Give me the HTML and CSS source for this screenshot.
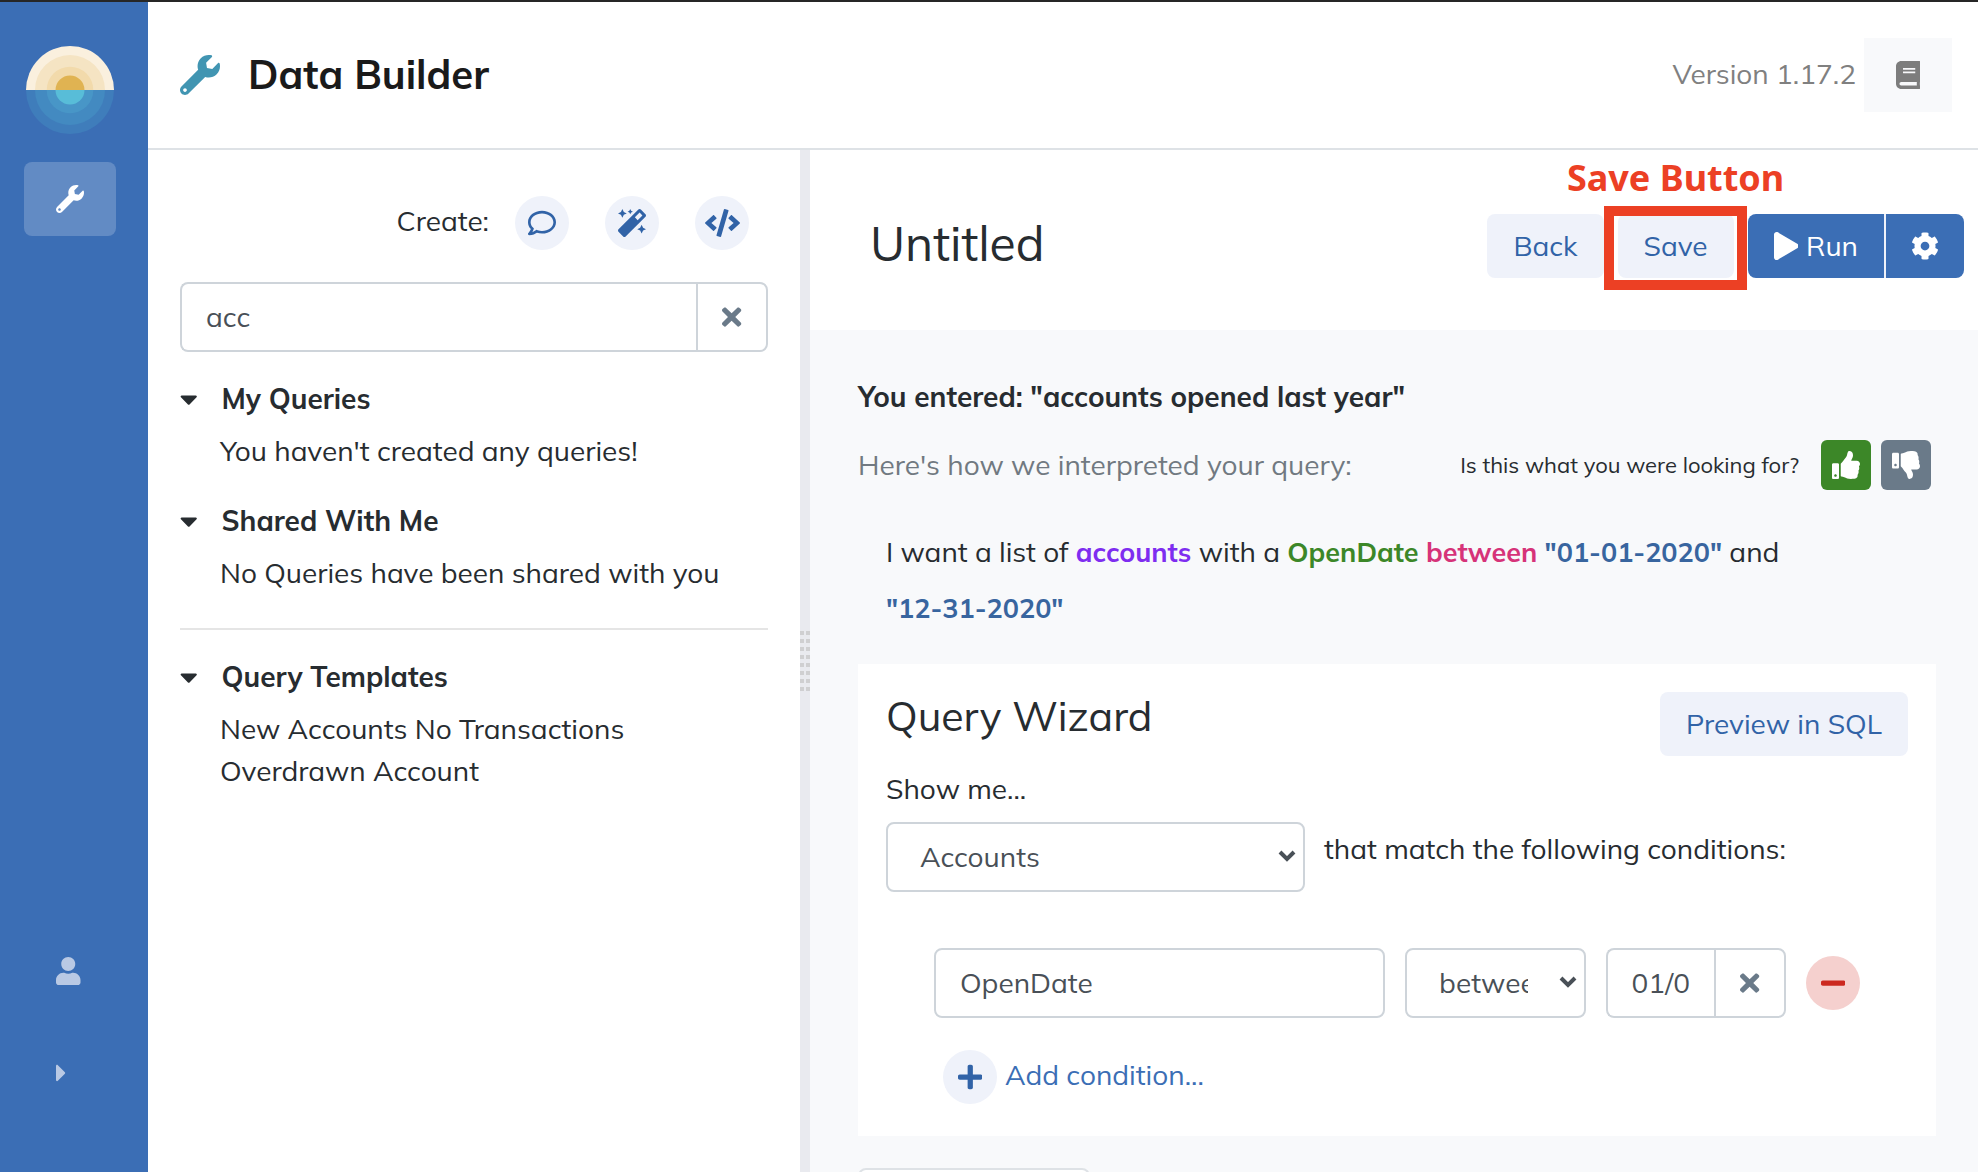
FILE: index.html
```html
<!DOCTYPE html>
<html lang="en">
<head>
    <meta charset="UTF-8">
    <meta name="viewport" content="width=device-width, initial-scale=1.0">
    <title>Data Builder</title>
    <link rel="stylesheet" href="styles.css">
</head>
<body>

    <nav class="sidebar">
        <a class="logo" href="#" aria-label="Home">
            <svg viewBox="0 0 88 88">
                <path d="M0 44a44 44 0 0 1 88 0z" fill="#faf0de"/>
                <path d="M9 44a35 35 0 0 1 70 0z" fill="#f5e4c3"/>
                <path d="M20.700 44a23.300 23.300 0 0 1 46.600 0z" fill="#f2daab"/>
                <path d="M29.500 44a14.500 14.500 0 0 1 29 0z" fill="#e0b352"/>
                <path d="M0 44a44 44 0 0 0 88 0z" fill="#3f7dbb"/>
                <path d="M9 44a35 35 0 0 0 70 0z" fill="#438ac1"/>
                <path d="M20.700 44a23.300 23.300 0 0 0 46.600 0z" fill="#4896c7"/>
                <path d="M29.500 44a14.500 14.500 0 0 0 29 0z" fill="#58bdd8"/>
            </svg>
        </a>
        <a class="nav-item active" href="#" aria-label="Data Builder">
            <svg class="icon" viewBox="0 0 512 512"><use href="#wrench"/></svg>
        </a>
        <a class="nav-item nav-bottom" href="#" aria-label="Account">
            <svg class="icon" viewBox="0 0 448 512"><path d="M224 256c70.700 0 128-57.300 128-128S294.700 0 224 0 96 57.300 96 128s57.300 128 128 128zm89.600 32h-16.700c-22.200 10.200-46.900 16-72.900 16s-50.600-5.800-72.900-16h-16.700C60.200 288 0 348.200 0 422.400V464c0 26.500 21.500 48 48 48h352c26.500 0 48-21.500 48-48v-41.600c0-74.200-60.200-134.400-134.400-134.400z"/></svg>
        </a>
        <button class="nav-item" type="button" aria-label="Expand menu">
            <svg class="icon" viewBox="0 0 192 512"><path d="M0 384.662V127.338c0-17.818 21.543-26.741 34.142-14.142l128.662 128.662c7.810 7.810 7.810 20.474 0 28.284L34.142 398.804C21.543 411.404 0 402.480 0 384.662z"/></svg>
        </button>
    </nav>

    <div class="page">
        <header class="topbar">
            <svg class="icon-title" viewBox="0 0 512 512"><use href="#wrench"/></svg>
            <h1>Data Builder</h1>
            <span class="version">Version 1.17.2</span>
            <a class="docs" href="#" aria-label="Documentation">
                <svg class="icon" viewBox="0 0 448 512"><path d="M448 360V24c0-13.300-10.700-24-24-24H96C43 0 0 43 0 96v320c0 53 43 96 96 96h328c13.300 0 24-10.700 24-24v-16c0-7.500-3.500-14.300-8.900-18.700-4.200-15.400-4.200-59.300 0-74.700 5.400-4.300 8.900-11.100 8.900-18.600zM128 134c0-3.300 2.700-6 6-6h212c3.300 0 6 2.700 6 6v20c0 3.300-2.700 6-6 6H134c-3.300 0-6-2.700-6-6v-20zm0 64c0-3.300 2.700-6 6-6h212c3.300 0 6 2.700 6 6v20c0 3.300-2.700 6-6 6H134c-3.300 0-6-2.700-6-6v-20zm253.400 250H96c-17.700 0-32-14.300-32-32 0-17.600 14.400-32 32-32h285.400c-1.900 17.100-1.900 46.900 0 64z"/></svg>
            </a>
        </header>

        <div class="split">
            <!-- Query list -->
            <aside class="queries">
                <div class="create">
                    <span class="create-label">Create:</span>
                    <button class="round" type="button" aria-label="Ask a question">
                        <svg class="icon" viewBox="0 0 512 512"><path d="M256 32C114.600 32 0 125.100 0 240c0 47.600 19.900 91.200 52.900 126.300C38 405.700 7 439.100 6.500 439.500c-6.600 7-8.400 17.200-4.600 26S14.400 480 24 480c61.500 0 110-25.700 139.100-46.300C192 442.800 223.200 448 256 448c141.400 0 256-93.100 256-208S397.400 32 256 32zm0 368c-26.700 0-53.100-4.100-78.400-12.100l-22.700-7.200-19.500 13.800c-14.300 10.100-33.900 21.400-57.500 29 7.300-12.100 14.400-25.700 19.900-40.200l10.600-28.100-20.600-21.800C69.700 314.100 48 282.200 48 240c0-88.200 93.300-160 208-160s208 71.800 208 160-93.300 160-208 160z"/></svg>
                    </button>
                    <button class="round" type="button" aria-label="Query wizard">
                        <svg class="icon" viewBox="0 0 512 512"><path d="M224 96l16-32 32-16-32-16-16-32-16 32-32 16 32 16 16 32zM80 160l26.660-53.330L160 80l-53.340-26.670L80 0 53.340 53.330 0 80l53.340 26.670L80 160zm352 128l-26.660 53.330L352 368l53.340 26.670L432 448l26.660-53.330L512 368l-53.340-26.670L432 288zm70.620-193.770L417.770 9.380C411.530 3.120 403.340 0 395.150 0c-8.190 0-16.380 3.120-22.630 9.380L9.380 372.520c-12.500 12.500-12.500 32.760 0 45.250l84.850 84.850c6.250 6.250 14.440 9.370 22.620 9.370 8.190 0 16.380-3.120 22.630-9.370l363.140-363.150c12.500-12.480 12.500-32.750 0-45.240zM359.450 203.460l-50.910-50.910 86.600-86.600 50.910 50.910-86.600 86.600z"/></svg>
                    </button>
                    <button class="round" type="button" aria-label="Write SQL">
                        <svg class="icon" viewBox="0 0 640 512"><path d="M278.900 511.500l-61-17.700c-6.400-1.800-10-8.500-8.200-14.900L346.200 8.700c1.800-6.400 8.500-10 14.900-8.200l61 17.700c6.400 1.800 10 8.500 8.200 14.900L293.800 503.300c-1.900 6.400-8.500 10.100-14.900 8.200zm-114-112.200l43.500-46.400c4.600-4.900 4.300-12.700-.8-17.200L117 256l90.600-79.700c5.100-4.500 5.500-12.300.8-17.200l-43.500-46.400c-4.500-4.800-12.100-5.100-17-.5L3.800 247.200c-5.100 4.700-5.100 12.800 0 17.500l144.100 135.100c4.900 4.600 12.500 4.400 17-.5zm327.200.6l144.100-135.100c5.100-4.700 5.100-12.800 0-17.500L492.100 112.100c-4.800-4.500-12.400-4.300-17 .5L431.600 159c-4.600 4.900-4.300 12.700.8 17.200L523 256l-90.600 79.700c-5.100 4.500-5.500 12.300-.8 17.200l43.500 46.400c4.500 4.900 12.100 5.100 17 .6z"/></svg>
                    </button>
                </div>

                <div class="input-group">
                    <input type="text" value="acc" aria-label="Search queries">
                    <button type="button" aria-label="Clear search">
                        <svg class="icon" viewBox="0 0 352 512"><use href="#times"/></svg>
                    </button>
                </div>

                <details open>
                    <summary><svg class="icon" viewBox="0 0 320 512"><use href="#caret"/></svg>My Queries</summary>
                    <p>You haven't created any queries!</p>
                </details>
                <details open>
                    <summary><svg class="icon" viewBox="0 0 320 512"><use href="#caret"/></svg>Shared With Me</summary>
                    <p>No Queries have been shared with you</p>
                </details>
                <hr>
                <details open>
                    <summary><svg class="icon" viewBox="0 0 320 512"><use href="#caret"/></svg>Query Templates</summary>
                    <a href="#">New Accounts No Transactions</a>
                    <a href="#">Overdrawn Account</a>
                </details>
            </aside>

            <div class="gutter"><div class="grip"></div></div>

            <!-- Query editor -->
            <main class="editor">
                <div class="editor-head">
                    <h2>Untitled</h2>
                    <button class="btn" type="button">Back</button>
                    <div class="callout">
                        <button class="btn" type="button">Save</button>
                        <span class="callout-box"></span>
                        <span class="callout-text">Save Button</span>
                    </div>
                    <div class="run-group">
                        <button class="btn btn-primary" type="button">
                            <svg class="icon" viewBox="0 0 448 512"><path d="M424.400 214.700L72.400 6.600C43.800-10.300 0 6.100 0 47.900V464c0 37.500 40.700 60.100 72.400 41.300l352-208c31.400-18.500 31.500-64.100 0-82.600z"/></svg>
                            Run
                        </button>
                        <button class="btn btn-primary" type="button" aria-label="Run settings">
                            <svg class="icon" viewBox="0 0 512 512"><path d="M487.400 315.700l-42.600-24.600c4.300-23.200 4.300-47 0-70.200l42.600-24.600c4.900-2.800 7.100-8.600 5.500-14-11.100-35.600-30-67.800-54.700-94.600-3.800-4.100-10-5.100-14.800-2.300L380.800 110c-17.900-15.400-38.500-27.300-60.800-35.100V25.800c0-5.600-3.900-10.500-9.400-11.700-36.700-8.200-74.300-7.800-109.200 0-5.500 1.200-9.400 6.100-9.400 11.700V75c-22.200 7.900-42.800 19.800-60.800 35.100L88.700 85.500c-4.900-2.800-11-1.900-14.800 2.300-24.700 26.700-43.600 58.900-54.700 94.600-1.700 5.400.6 11.200 5.500 14L67.300 221c-4.300 23.200-4.300 47 0 70.200l-42.600 24.600c-4.900 2.800-7.100 8.600-5.500 14 11.100 35.600 30 67.800 54.700 94.600 3.800 4.100 10 5.100 14.800 2.300l42.600-24.600c17.900 15.400 38.500 27.300 60.800 35.100v49.200c0 5.600 3.900 10.500 9.400 11.700 36.700 8.200 74.300 7.800 109.200 0 5.500-1.200 9.400-6.100 9.400-11.700v-49.200c22.200-7.900 42.800-19.800 60.800-35.100l42.600 24.600c4.900 2.800 11 1.900 14.800-2.300 24.700-26.700 43.600-58.900 54.700-94.600 1.500-5.500-.7-11.300-5.600-14.100zM256 336c-44.100 0-80-35.900-80-80s35.900-80 80-80 80 35.900 80 80-35.900 80-80 80z"/></svg>
                        </button>
                    </div>
                </div>

                <div class="editor-body">
                    <p class="entered">You entered: "accounts opened last year"</p>
                    <div class="feedback">
                        <span class="interpreted">Here's how we interpreted your query:</span>
                        <span class="feedback-question">Is this what you were looking for?</span>
                        <button class="thumb thumb-up" type="button" aria-label="Yes">
                            <svg class="icon" viewBox="0 0 512 512"><path d="M104 224H24c-13.255 0-24 10.745-24 24v240c0 13.255 10.745 24 24 24h80c13.255 0 24-10.745 24-24V248c0-13.255-10.745-24-24-24zM64 472c-13.255 0-24-10.745-24-24s10.745-24 24-24 24 10.745 24 24-10.745 24-24 24zM384 81.452c0 42.416-25.970 66.208-33.277 94.548h101.723c33.397 0 59.397 27.746 59.553 58.098.084 17.938-7.546 37.249-19.439 49.197l-.11.11c9.836 23.337 8.237 56.037-9.308 79.469 8.681 25.895-.069 57.704-16.382 74.757 4.298 17.598 2.244 32.575-6.148 44.632C440.202 511.587 389.616 512 346.839 512l-2.845-.001c-48.287-.017-87.806-17.598-119.560-31.725-15.957-7.099-36.821-15.887-52.651-16.178-6.540-.12-11.783-5.457-11.783-11.998v-213.770c0-3.200 1.282-6.271 3.558-8.521 39.614-39.144 56.648-80.587 89.117-113.111 14.804-14.832 20.188-37.236 25.393-58.902C282.515 39.293 291.817 0 312 0c24 0 72 8 72 81.452z"/></svg>
                        </button>
                        <button class="thumb" type="button" aria-label="No">
                            <svg class="icon" viewBox="0 0 512 512"><path d="M0 56v240c0 13.255 10.745 24 24 24h80c13.255 0 24-10.745 24-24V56c0-13.255-10.745-24-24-24H24C10.745 32 0 42.745 0 56zm40 200c0-13.255 10.745-24 24-24s24 10.745 24 24-10.745 24-24 24-24-10.745-24-24zm272 256c-20.183 0-29.485-39.293-33.931-57.795-5.206-21.666-10.589-44.070-25.393-58.902-32.469-32.524-49.503-73.967-89.117-113.111a11.980 11.980 0 0 1-3.558-8.521V59.901c0-6.541 5.243-11.878 11.783-11.998 15.831-.29 36.694-9.079 52.651-16.178C256.189 17.598 295.709.017 343.995 0h2.844c42.777 0 93.363.413 113.774 29.737 8.392 12.057 10.446 27.034 6.148 44.632 16.312 17.053 25.063 48.863 16.382 74.757 17.544 23.432 19.143 56.132 9.308 79.469l.11.11c11.893 11.949 19.523 31.259 19.439 49.197-.156 30.352-26.157 58.098-59.553 58.098H350.723C358.030 364.340 384 388.132 384 430.548 384 504 336 512 312 512z"/></svg>
                        </button>
                    </div>
                    <p class="sentence">I want a list of <b class="entity">accounts</b> with a <b class="field">OpenDate</b> <b class="operator">between</b> <b class="value">"01-01-2020"</b> and <b class="value">"12-31-2020"</b></p>

                    <section class="wizard">
                        <div class="wizard-head">
                            <h3>Query Wizard</h3>
                            <button class="btn" type="button">Preview in SQL</button>
                        </div>
                        <label for="entity">Show me...</label>
                        <div class="entity-row">
                            <div class="select">
                                <select id="entity"><option>Accounts</option><option>Transactions</option></select>
                                <svg viewBox="0 0 18 12"><path d="M2 2l7 7 7-7"/></svg>
                            </div>
                            <span class="entity-text">that match the following conditions:</span>
                        </div>
                        <div class="conditions">
                            <input type="text" value="OpenDate" aria-label="Field">
                            <div class="select">
                                <select aria-label="Operator"><option>between</option><option>before</option><option>after</option></select>
                                <svg viewBox="0 0 18 12"><path d="M2 2l7 7 7-7"/></svg>
                            </div>
                            <div class="input-group">
                                <input type="text" value="01/01/2020 - 12/31/2020" aria-label="Value">
                                <button type="button" aria-label="Clear value">
                                    <svg class="icon" viewBox="0 0 352 512"><use href="#times"/></svg>
                                </button>
                            </div>
                            <button class="round remove" type="button" aria-label="Remove condition">
                                <svg class="icon" viewBox="0 0 448 512"><path d="M416 208H32c-17.670 0-32 14.330-32 32v32c0 17.670 14.330 32 32 32h384c17.670 0 32-14.330 32-32v-32c0-17.670-14.330-32-32-32z"/></svg>
                            </button>
                        </div>
                        <div class="add-row">
                            <button class="round" type="button" aria-label="Add">
                                <svg class="icon" viewBox="0 0 448 512"><path d="M416 208H272V64c0-17.670-14.330-32-32-32h-32c-17.670 0-32 14.330-32 32v144H32c-17.670 0-32 14.330-32 32v32c0 17.670 14.330 32 32 32h144v144c0 17.670 14.330 32 32 32h32c17.670 0 32-14.330 32-32V304h144c17.670 0 32-14.330 32-32v-32c0-17.670-14.330-32-32-32z"/></svg>
                            </button>
                            <a href="#">Add condition...</a>
                        </div>
                    </section>

                    <div class="results-box"></div>
                </div>
            </main>
        </div>
    </div>

    <!-- Shared icons -->
    <svg class="symbols" aria-hidden="true">
        <defs>
            <path id="wrench" d="M507.730 109.100c-2.240-9.030-13.540-12.090-20.120-5.510l-74.360 74.360-67.880-11.310-11.310-67.880 74.360-74.360c6.620-6.620 3.430-17.900-5.660-20.160-47.380-11.740-99.550.91-136.580 37.930-39.640 39.640-50.550 97.100-34.050 147.200L18.740 402.760c-24.990 24.990-24.990 65.510 0 90.500 24.990 24.990 65.510 24.990 90.500 0l213.210-213.210c50.120 16.710 107.470 5.680 147.370-34.220 37.070-37.070 49.700-89.320 37.910-136.730zM64 472c-13.250 0-24-10.750-24-24 0-13.260 10.750-24 24-24s24 10.740 24 24c0 13.250-10.750 24-24 24z"/>
            <path id="times" d="M242.720 256l100.070-100.070c12.280-12.280 12.280-32.190 0-44.480l-22.240-22.240c-12.280-12.280-32.190-12.280-44.480 0L176 189.280 75.930 89.210c-12.280-12.280-32.190-12.280-44.480 0L9.210 111.450c-12.280 12.280-12.280 32.190 0 44.480L109.280 256 9.210 356.070c-12.280 12.280-12.280 32.190 0 44.480l22.240 22.240c12.280 12.280 32.200 12.280 44.480 0L176 322.720l100.070 100.070c12.280 12.280 32.200 12.280 44.480 0l22.240-22.240c12.280-12.280 12.280-32.190 0-44.480L242.720 256z"/>
            <path id="caret" d="M31.300 192h257.300c17.800 0 26.700 21.500 14.100 34.100L174.100 354.800c-7.800 7.800-20.500 7.800-28.300 0L17.200 226.100C4.600 213.500 13.500 192 31.300 192z"/>
        </defs>
    </svg>

</body>
</html>
```
FILE: styles.css
```css
* {
    box-sizing: border-box;
}

body {
    margin: 0;
    height: 100vh;
    display: flex;
    overflow: hidden;
    border-top: 2px solid #262626;
    background: #fff;
    color: #272c30;
    font-family: Mulish, Lato, sans-serif;
    font-size: 28px;
    line-height: 42px;
}

h1, h2, h3, p {
    margin: 0;
}

h2, h3 {
    font-weight: 400;
}

a {
    color: inherit;
    text-decoration: none;
}

button, input, select {
    font: inherit;
    color: inherit;
}

button {
    border: 0;
    padding: 0;
    background: none;
    cursor: pointer;
}

.icon {
    height: 28px;
    fill: currentColor;
    flex: none;
}

.symbols {
    position: absolute;
    width: 0;
    height: 0;
}

/* Sidebar */
.sidebar {
    flex: none;
    display: flex;
    flex-direction: column;
    width: 148px;
    padding: 44px 32px 62px 24px;
    background: #3b6eb5;
}

.logo {
    align-self: center;
    width: 88px;
    height: 88px;
    margin-bottom: 28px;
}

.nav-item {
    display: flex;
    align-items: center;
    height: 74px;
    padding: 0 32px;
    border-radius: 8px;
    color: #b9c9e4;
}

.nav-item.active {
    background: #628bc4;
    color: #fff;
}

.nav-bottom {
    margin-top: auto;
    margin-bottom: 28px;
}

/* Top bar */
.page {
    flex: 1;
    min-width: 0;
    display: flex;
    flex-direction: column;
}

.topbar {
    flex: none;
    display: flex;
    align-items: center;
    height: 148px;
    padding: 0 26px 0 32px;
    border-bottom: 2px solid #dee2e6;
}

.icon-title {
    height: 40px;
    margin-right: 28px;
    fill: #4195b2;
}

h1 {
    color: #1a1a1a;
    font-size: 40px;
    font-weight: 700;
}

h1, .version {
    padding-bottom: 2px;
}

.version {
    margin-left: auto;
    margin-right: 8px;
    color: #808080;
}

.docs {
    display: flex;
    align-items: center;
    justify-content: center;
    width: 88px;
    height: 74px;
    background: #f8f9fb;
    color: #7d7d7d;
}

/* Query list */
.split {
    flex: 1;
    min-height: 0;
    display: flex;
}

.queries {
    flex: none;
    width: calc(40% - 80px);
    padding: 46px 32px;
}

.create {
    display: flex;
    align-items: center;
    justify-content: flex-end;
    gap: 36px;
    margin-bottom: 32px;
    padding-right: 19px;
}

.create-label {
    margin-right: -10px;
    padding-bottom: 4px;
}

.round {
    flex: none;
    display: flex;
    align-items: center;
    justify-content: center;
    width: 54px;
    height: 54px;
    border-radius: 50%;
    background: #eff2fa;
    color: #3163a7;
}

input, select {
    width: 100%;
    min-width: 0;
    height: 70px;
    padding: 0 24px;
    border: 2px solid #ced4da;
    border-radius: 8px;
    background: #fff;
    color: #495057;
}

input {
    padding-bottom: 2px;
}

.input-group {
    display: flex;
    min-width: 0;
}

.input-group input {
    flex: 1;
    border-right: 0;
    border-radius: 8px 0 0 8px;
}

.input-group button {
    flex: none;
    display: flex;
    align-items: center;
    justify-content: center;
    width: 72px;
    border: 2px solid #ced4da;
    border-radius: 0 8px 8px 0;
    color: #6a7a89;
}

details {
    margin-top: 28px;
    padding-left: 40px;
}

summary {
    display: flex;
    align-items: center;
    gap: 24px;
    margin-left: -40px;
    margin-bottom: 10px;
    list-style: none;
    font-weight: 700;
    cursor: pointer;
}

.input-group + details, hr + details {
    margin-top: 26px;
}

details a {
    display: block;
}

hr {
    margin: 34px 0 0;
    border: 0;
    border-top: 2px solid #e5e5e5;
}

.gutter {
    flex: none;
    display: flex;
    align-items: center;
    width: 10px;
    background: #e9eaef;
}

.grip {
    width: 10px;
    height: 60px;
    background:
        linear-gradient(90deg, transparent 4px, #e9eaef 4px) 0 0 / 6px 8px,
        linear-gradient(#cfcfd1 4px, transparent 4px) 0 0 / 10px 8px;
}

/* Query editor */
.editor {
    flex: 1;
    min-width: 0;
    overflow: hidden;
    background: #f8f9fb;
}

.editor-head {
    display: flex;
    align-items: center;
    gap: 14px;
    padding: 64px 14px 52px 60px;
    background: #fff;
}

h2 {
    flex: 1;
    padding-bottom: 6px;
    font-size: 48px;
}

.btn {
    flex: none;
    display: flex;
    align-items: center;
    justify-content: center;
    gap: 8px;
    min-width: 116px;
    height: 64px;
    padding: 0 26px;
    border-radius: 8px;
    background: #eff2fa;
    color: #3163a7;
}

.btn-primary {
    background: #3b6eb5;
    color: #fff;
}

.run-group {
    display: flex;
}

.run-group .btn:first-child {
    border-radius: 8px 0 0 8px;
}

.run-group .btn:last-child {
    min-width: 0;
    padding: 0 25px;
    border-left: 2px solid #eff2fa;
    border-radius: 0 8px 8px 0;
}

/* Highlight round the save button */
.callout {
    position: relative;
}

.callout-box {
    position: absolute;
    inset: -8px -13px -12px -14px;
    border: 10px solid #ec4024;
    pointer-events: none;
}

.callout-text {
    position: absolute;
    bottom: calc(100% + 18px);
    left: 50%;
    transform: translateX(-50%);
    color: #ec4024;
    font: 700 36px/36px "Noto Sans", sans-serif;
    white-space: nowrap;
}

.editor-body {
    padding: 46px 42px 32px 48px;
}

.entered {
    margin-bottom: 22px;
    font-weight: 700;
}

.feedback {
    display: flex;
    align-items: center;
    gap: 10px;
    padding-right: 5px;
}

.interpreted {
    flex: 1;
    color: #717981;
}

.feedback-question {
    margin-right: 12px;
    font-size: 22px;
}

.thumb {
    display: flex;
    align-items: center;
    justify-content: center;
    width: 50px;
    height: 50px;
    border-radius: 6px;
    background: #6a7a89;
    color: #fff;
}

.thumb-up {
    background: #3c8728;
}

.sentence {
    margin: 34px 28px 28px;
    line-height: 56px;
}

.sentence b {
    font-size: 27px;
}

.entity { color: #7e2df0; }
.field { color: #3c8728; }
.operator { color: #d63379; }

.value {
    color: #38659f;
    white-space: nowrap;
}

.wizard {
    padding: 28px 28px 32px;
    background: #fff;
}

.wizard-head {
    display: flex;
    align-items: flex-start;
    justify-content: space-between;
    margin-bottom: 12px;
}

h3 {
    font-size: 41px;
    line-height: 48px;
}

.entity-row {
    display: flex;
    gap: 19px;
    margin: 12px 0 56px;
}

.entity-row .select {
    width: 41%;
}

.entity-text {
    padding-top: 6px;
}

.select {
    position: relative;
}

.select select {
    appearance: none;
    padding: 0 56px 0 32px;
}

.select svg {
    position: absolute;
    right: 9px;
    top: 28px;
    width: 18px;
    height: 12px;
    fill: none;
    stroke: #495057;
    stroke-width: 4;
    pointer-events: none;
}

.conditions {
    display: grid;
    grid-template-columns: 5fr 2fr 2fr 54px;
    align-items: center;
    gap: 20px;
    padding: 0 48px;
    margin-bottom: 32px;
}

.remove {
    background: #f5d0ce;
    color: #cc281f;
}

.add-row {
    display: flex;
    align-items: center;
    gap: 8px;
    padding-left: 57px;
    color: #3b6eb5;
}

.add-row a {
    padding-bottom: 4px;
}

.results-box {
    width: 232px;
    height: 70px;
    margin-top: 32px;
    border: 2px solid #dee2e6;
    border-radius: 8px;
    background: #fff;
}
```
